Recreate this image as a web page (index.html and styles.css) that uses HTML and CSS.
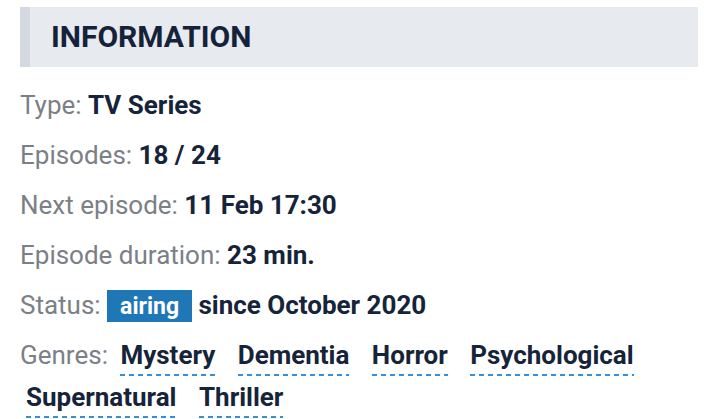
FILE: index.html
```html
<!DOCTYPE html>
<html lang="en">

<head>
    <meta charset="UTF-8">
    <meta name="viewport" content="width=device-width, initial-scale=1.0">
    <title>Information</title>
    <link rel="stylesheet" href="styles.css">
</head>

<body>
    <div class="info">
        <h2 class="info-title">INFORMATION</h2>
        <div class="info-row">Type: <b>TV Series</b></div>
        <div class="info-row">Episodes: <b>18 / 24</b></div>
        <div class="info-row">Next episode: <b>11 Feb 17:30</b></div>
        <div class="info-row">Episode duration: <b>23 min.</b></div>
        <div class="info-row">Status: <span class="badge">airing</span> <b>since October 2020</b></div>
        <div class="info-row info-genres">Genres:
            <a class="genre" href="#">Mystery</a>
            <a class="genre" href="#">Dementia</a>
            <a class="genre" href="#">Horror</a>
            <a class="genre" href="#">Psychological</a>
            <a class="genre" href="#">Supernatural</a>
            <a class="genre" href="#">Thriller</a>
        </div>
    </div>
</body>

</html>
```

FILE: styles.css
```css
body {
    margin: 0;
    background: #fff;
    font-family: Roboto, 'Noto Sans', sans-serif;
}

.info {
    padding: 7px 22px 0 20px;
}

.info-title {
    margin: 0 0 16px 0;
    height: 60px;
    line-height: 60px;
    padding-left: 21px;
    background-color: #e7eaef;
    border-left: 10px solid #d4d9e1;
    color: #14233a;
    font-size: 30px;
    font-weight: bold;
}

.info-row {
    font-size: 26px;
    line-height: 44px;
    margin-bottom: 6px;
    color: #7b8087;
}

.info-row b {
    color: #16243a;
    font-weight: bold;
}

.info-genres {
    line-height: 42px;
    padding-top: 1px;
}

.badge {
    display: inline-block;
    line-height: 26px;
    padding: 4px 13px 2px 13px;
    background-color: #1f77b6;
    color: white;
    font-size: 23px;
    font-weight: bold;
}

.genre {
    display: inline-block;
    margin: 0 10px 0 6px;
    line-height: 38px;
    padding-bottom: 2px;
    color: #16243a;
    font-weight: bold;
    text-decoration: none;
    background: linear-gradient(to right, #3590d8 60%, transparent 0) left bottom / 9px 2px repeat-x;
}
```
